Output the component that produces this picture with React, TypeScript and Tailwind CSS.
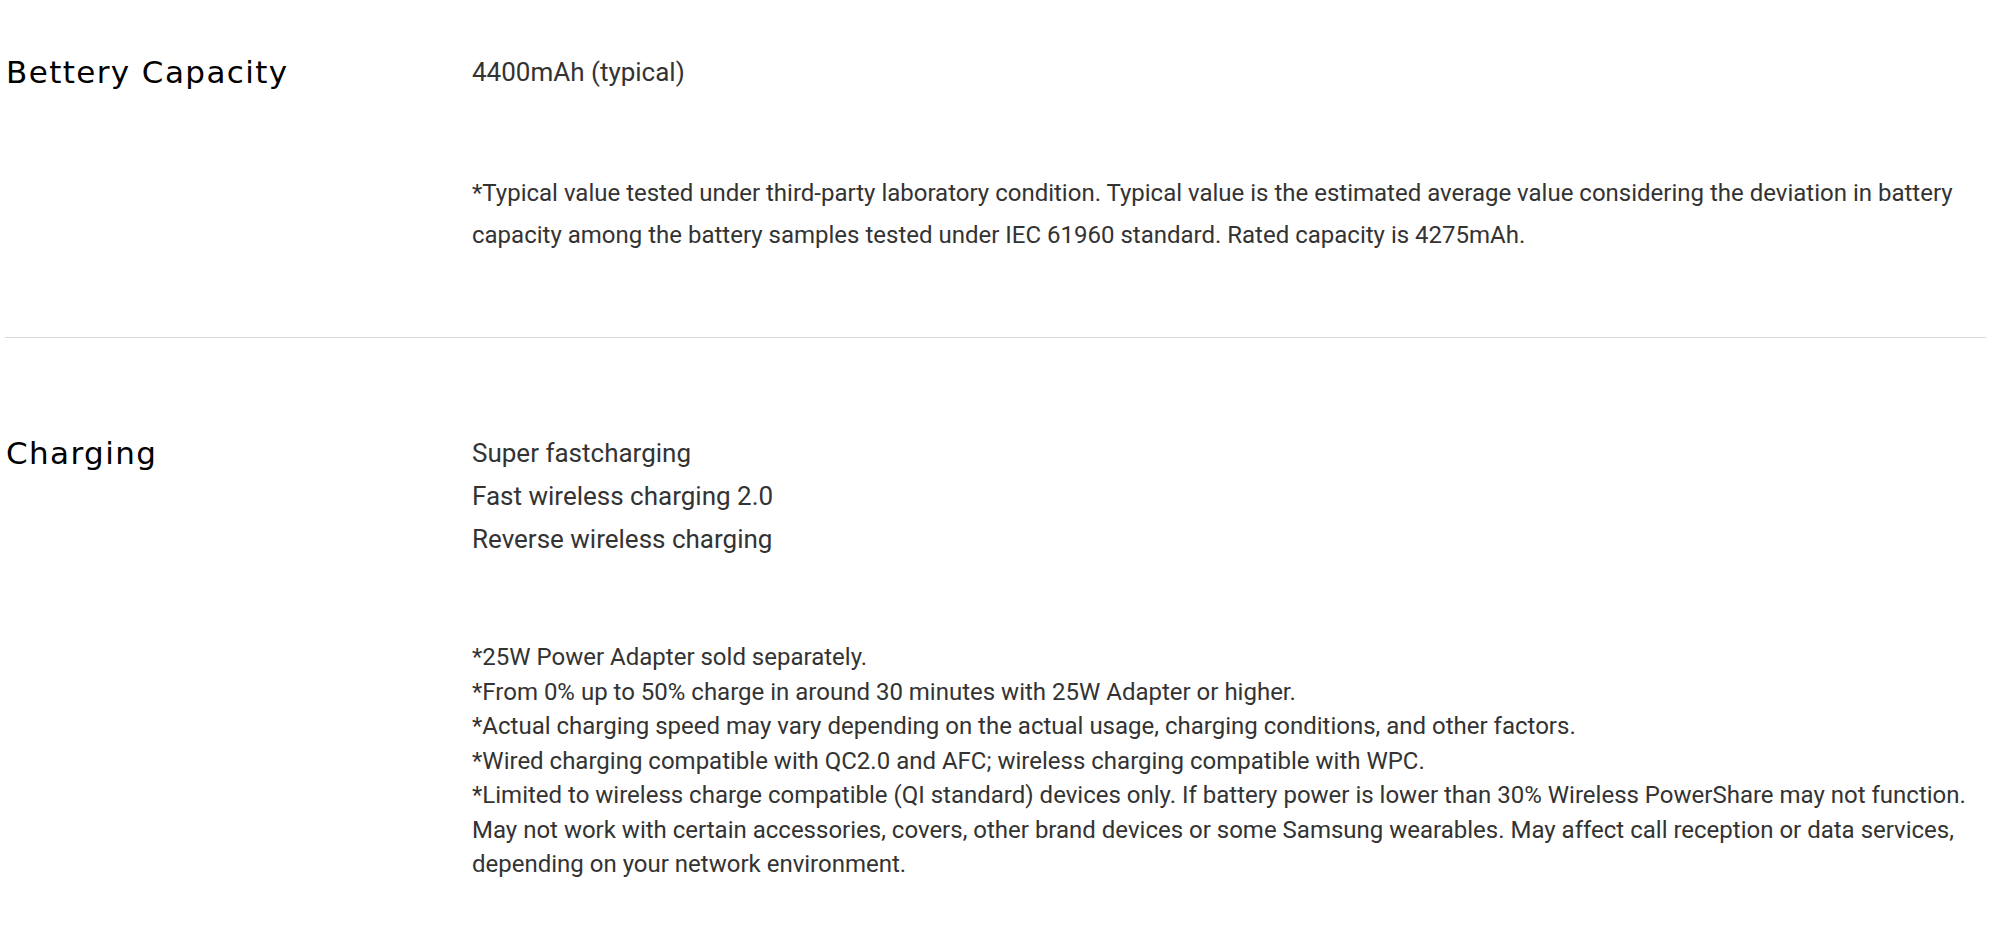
import React from 'react';

type Spec = {
  title: string;
  values: string[];
  notes: string[];
};

const specs: Spec[] = [
  {
    title: 'Bettery Capacity',
    values: ['4400mAh (typical)'],
    notes: [
      '*Typical value tested under third-party laboratory condition. Typical value is the estimated average value considering the deviation in battery',
      'capacity among the battery samples tested under IEC 61960 standard. Rated capacity is 4275mAh.',
    ],
  },
  {
    title: 'Charging',
    values: ['Super fastcharging', 'Fast wireless charging 2.0', 'Reverse wireless charging'],
    notes: [
      '*25W Power Adapter sold separately.',
      '*From 0% up to 50% charge in around 30 minutes with 25W Adapter or higher.',
      '*Actual charging speed may vary depending on the actual usage, charging conditions, and other factors.',
      '*Wired charging compatible with QC2.0 and AFC; wireless charging compatible with WPC.',
      '*Limited to wireless charge compatible (QI standard) devices only. If battery power is lower than 30% Wireless PowerShare may not function.',
      'May not work with certain accessories, covers, other brand devices or some Samsung wearables. May affect call reception or data services,',
      'depending on your network environment.',
    ],
  },
];

const SpecRow: React.FC<{ spec: Spec; first?: boolean }> = ({ spec, first }) => {
  return (
    <section
      className={`flex items-start ${
        first ? 'pt-[51px] pb-[81px] border-b border-[#d9d9d9]' : 'pt-[94px] pb-[60px]'
      }`}
    >
      <h3 className="w-[467px] shrink-0 pl-[1px] font-['DejaVu_Sans',sans-serif] text-[31px] leading-[43px] tracking-[1.4px] text-black font-normal">
        {spec.title}
      </h3>
      <div className="flex-1 font-['Roboto',sans-serif] text-[#333333]">
        {spec.values.map((v) => (
          <p key={v} className="text-[26px] leading-[43px] whitespace-nowrap">
            {v}
          </p>
        ))}
        {/* disclaimers */}
        <div className={first ? 'mt-[78px]' : 'mt-[79px]'}>
          {spec.notes.map((n, i) => (
            <p
              key={i}
              className={`text-[24px] whitespace-nowrap ${first ? 'leading-[42px]' : 'leading-[34.5px]'}`}
            >
              {n}
            </p>
          ))}
        </div>
      </div>
    </section>
  );
};

export default function App() {
  return (
    <div className="min-h-screen w-full bg-white">
      <div className="ml-[5px] mr-[14px]">
        {specs.map((s, i) => (
          <SpecRow key={s.title} spec={s} first={i === 0} />
        ))}
      </div>
    </div>
  );
}
